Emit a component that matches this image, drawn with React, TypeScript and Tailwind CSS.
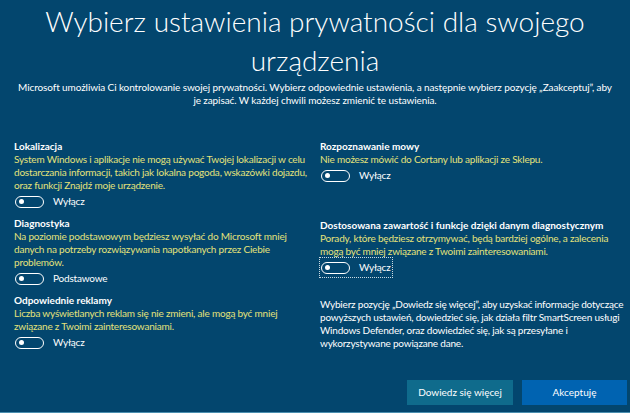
import React from "react";

const Toggle = ({ label, focused }: { label: string; focused?: boolean }) => (
  <div
    className={`flex items-center h-[19px] w-fit ${
      focused ? "outline outline-1 outline-dotted outline-white/80 pr-[1px]" : ""
    }`}
  >
    <div className="w-[29px] h-[12px] rounded-full border-[1.5px] border-white flex items-center pl-[2.5px] ml-[1px]">
      <div className="w-[5.5px] h-[5.5px] rounded-full bg-white" />
    </div>
    <span className="text-white text-[10px] tracking-[-0.2px] leading-[13px] ml-[9px]">{label}</span>
  </div>
);

const Section = ({
  title,
  lines,
  toggle,
  focused,
}: {
  title: string;
  lines: string[];
  toggle: string;
  focused?: boolean;
}) => (
  <div className="flex flex-col">
    <div className="text-white text-[10px] font-bold leading-[13px] whitespace-nowrap">{title}</div>
    <div className="text-[#e4e27a] text-[10px] tracking-[-0.2px] leading-[13px] whitespace-nowrap">
      {lines.map((l, i) => (
        <div key={i}>{l}</div>
      ))}
    </div>
    <Toggle label={toggle} focused={focused} />
  </div>
);

export default function App() {
  return (
    <div
      className="w-[630px] h-[413px] bg-[#03466e] overflow-hidden flex flex-col border-b border-[#4a8fb0]"
      style={{ fontFamily: 'Lato, "Open Sans", sans-serif' }}
    >
      <h1 className="text-white text-center font-light text-[28px] leading-[39px] mt-[2px] whitespace-nowrap">
        Wybierz ustawienia prywatności dla swojego
        <br />
        urządzenia
      </h1>
      <p className="text-white text-center text-[10px] tracking-[-0.1px] leading-[13px] mt-[1px] whitespace-nowrap">
        Microsoft umożliwia Ci kontrolowanie swojej prywatności. Wybierz odpowiednie ustawienia, a następnie wybierz
        pozycję „Zaakceptuj”, aby
        <br />
        je zapisać. W każdej chwili możesz zmienić te ustawienia.
      </p>
      <div className="flex mt-[33px] pl-[14px]">
        <div className="w-[306px] flex flex-col gap-[6px]">
          <Section
            title="Lokalizacja"
            lines={[
              "System Windows i aplikacje nie mogą używać Twojej lokalizacji w celu",
              "dostarczania informacji, takich jak lokalna pogoda, wskazówki dojazdu,",
              "oraz funkcji Znajdź moje urządzenie.",
            ]}
            toggle="Wyłącz"
          />
          <Section
            title="Diagnostyka"
            lines={[
              "Na poziomie podstawowym będziesz wysyłać do Microsoft mniej",
              "danych na potrzeby rozwiązywania napotkanych przez Ciebie",
              "problemów.",
            ]}
            toggle="Podstawowe"
          />
          <Section
            title="Odpowiednie reklamy"
            lines={[
              "Liczba wyświetlanych reklam się nie zmieni, ale mogą być mniej",
              "związane z Twoimi zainteresowaniami.",
            ]}
            toggle="Wyłącz"
          />
        </div>
        <div className="flex-1 flex flex-col">
          <Section
            title="Rozpoznawanie mowy"
            lines={["Nie możesz mówić do Cortany lub aplikacji ze Sklepu."]}
            toggle="Wyłącz"
          />
          <div className="mt-[34px]">
            <Section
              title="Dostosowana zawartość i funkcje dzięki danym diagnostycznym"
              lines={[
                "Porady, które będziesz otrzymywać, będą bardziej ogólne, a zalecenia",
                "mogą być mniej związane z Twoimi zainteresowaniami.",
              ]}
              toggle="Wyłącz"
              focused
            />
          </div>
          <p className="text-white text-[10px] tracking-[-0.2px] leading-[13px] mt-[21px] whitespace-nowrap">
            Wybierz pozycję „Dowiedz się więcej”, aby uzyskać informacje dotyczące
            <br />
            powyższych ustawień, dowiedzieć się, jak działa filtr SmartScreen usługi
            <br />
            Windows Defender, oraz dowiedzieć się, jak są przesyłane i
            <br />
            wykorzystywane powiązane dane.
          </p>
        </div>
      </div>
      <div className="mt-auto flex justify-end gap-[9px] pr-[3px] pb-[7px]">
        <button className="w-[106px] h-[25px] bg-[#0f6b8c] text-white text-[10px]">Dowiedz się więcej</button>
        <button className="w-[105px] h-[25px] bg-[#0063b1] text-white text-[10px]">Akceptuję</button>
      </div>
    </div>
  );
}
